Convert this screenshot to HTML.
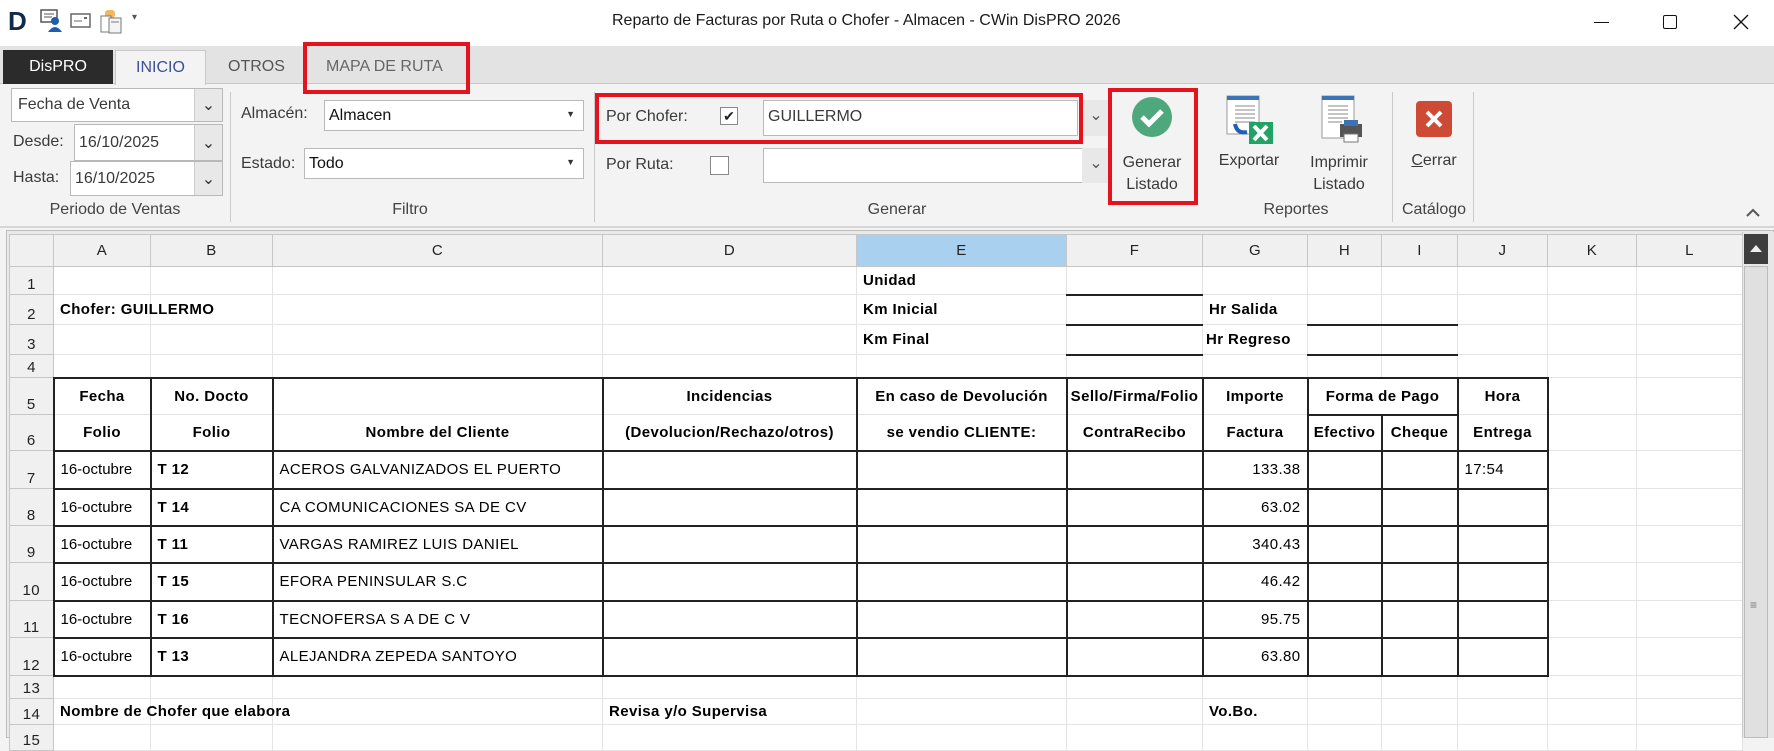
<!DOCTYPE html>
<html><head><meta charset="utf-8">
<style>
*{box-sizing:border-box;margin:0;padding:0}
body{width:1774px;height:738px;overflow:hidden;background:#f3f3f3;font-family:"Liberation Sans",sans-serif;position:relative;color:#333}
.a{position:absolute}
.rt{font-size:16px;color:#3a3a3a;white-space:nowrap}
.box{position:absolute;background:#fff;border:1px solid #b9b9b9}
.dd{position:absolute;background:#e8e8e8;border-left:1px solid #ccc;top:0;bottom:0;right:0;width:28px;display:flex;align-items:center;justify-content:center}
.sep{position:absolute;top:92px;height:130px;width:1px;background:#c9c9c9}
.red{position:absolute;border:4px solid #e3141e}
.glabel{position:absolute;top:201px;font-size:16px;color:#444;transform:translateX(-50%);white-space:nowrap}
table{position:absolute;left:9px;top:234px;width:1733px;border-collapse:collapse;table-layout:fixed;background:#fff;font-size:15px;color:#000}
td{border:1px solid #e4e4e4;white-space:nowrap;overflow:hidden;padding:0 6px;vertical-align:middle;letter-spacing:0.4px}
td.ch{background:#f0f0f0;border:1px solid #c6c6c6;text-align:center;font-size:15px;color:#222}
td.rh{background:#f0f0f0;border:1px solid #c6c6c6;text-align:center;vertical-align:bottom;font-size:15px;color:#222;padding:0 0 1px 0}
.bd{font-weight:bold}
.c{text-align:center}
.r{text-align:right}
.hx{border-left:2px solid #222;border-right:2px solid #222}
.t{border-top:2px solid #222}
.bo{border-bottom:2px solid #222}
.bx{border:2px solid #222}
.ub{border-bottom:2px solid #222}
.sb{z-index:5}
</style></head><body>
<!-- title bar -->
<div class="a" style="left:0;top:0;width:1774px;height:46px;background:#fff"></div>
<div class="a" style="left:8px;top:6px;font:bold 26px 'Liberation Sans',sans-serif;color:#0f2a4a">D</div>
<svg class="a" style="left:40px;top:8px" width="24" height="26"><rect x="1" y="2" width="16" height="12" fill="#fff" stroke="#555" stroke-width="1.5"/><line x1="4" y1="6" x2="14" y2="6" stroke="#555"/><line x1="4" y1="9" x2="12" y2="9" stroke="#555"/><circle cx="15" cy="13" r="4" fill="#1d5fae"/><path d="M8 24 Q15 14 22 24Z" fill="#1d5fae"/></svg>
<svg class="a" style="left:70px;top:13px" width="22" height="16"><rect x="1" y="1" width="19" height="13" fill="#fff" stroke="#666" stroke-width="1.5"/><line x1="4" y1="8" x2="12" y2="8" stroke="#666"/><rect x="14" y="4" width="3" height="2" fill="#666"/></svg>
<svg class="a" style="left:100px;top:8px" width="24" height="28"><rect x="5" y="2" width="10" height="8" rx="3" fill="#f0b860"/><rect x="1" y="8" width="10" height="16" fill="#fff" stroke="#777"/><rect x="9" y="10" width="12" height="15" fill="#f4f4f4" stroke="#777"/><line x1="11" y1="14" x2="19" y2="14" stroke="#777"/></svg>
<div class="a" style="left:132px;top:12px;font-size:10px;color:#555">▾</div>
<div class="a" style="left:612px;top:12px;font-size:16px;color:#1a1a1a;white-space:nowrap">Reparto de Facturas por Ruta o Chofer - Almacen - CWin DisPRO 2026</div>
<div class="a" style="left:1594px;top:22px;width:15px;height:1px;background:#111"></div>
<div class="a" style="left:1663px;top:15px;width:14px;height:14px;border:1.5px solid #111;border-radius:2px"></div>
<svg class="a" style="left:1733px;top:14px" width="16" height="16"><path d="M1 1L15 15M15 1L1 15" stroke="#111" stroke-width="1.3"/></svg>
<!-- tabs -->
<div class="a" style="left:0;top:46px;width:1774px;height:38px;background:#e3e3e3;border-bottom:1px solid #c8c8c8"></div>
<div class="a" style="left:3px;top:50px;width:110px;height:34px;background:#2b2b2b;color:#fff;font-size:16px;text-align:center;line-height:34px">DisPRO</div>
<div class="a" style="left:115px;top:50px;width:91px;height:35px;background:#f3f3f3;border:1px solid #c8c8c8;border-bottom:none;color:#3d4f9a;font-size:16px;text-align:center;line-height:34px">INICIO</div>
<div class="a rt" style="left:228px;top:58px;color:#555">OTROS</div>
<div class="a rt" style="left:326px;top:58px;color:#666">MAPA DE RUTA</div>
<div class="red" style="left:303px;top:42px;width:167px;height:52px"></div>
<!-- Periodo -->
<div class="box" style="left:11px;top:88px;width:212px;height:34px"><span class="rt" style="position:absolute;left:6px;top:7px">Fecha de Venta</span><div class="dd">⌄</div></div>
<div class="a rt" style="left:13px;top:133px">Desde:</div>
<div class="box" style="left:74px;top:124px;width:149px;height:37px"><span class="rt" style="position:absolute;left:4px;top:9px">16/10/2025</span><div class="dd">⌄</div></div>
<div class="a rt" style="left:13px;top:169px">Hasta:</div>
<div class="box" style="left:70px;top:161px;width:153px;height:35px"><span class="rt" style="position:absolute;left:4px;top:8px">16/10/2025</span><div class="dd">⌄</div></div>
<div class="glabel" style="left:115px">Periodo de Ventas</div>
<div class="sep" style="left:230px"></div>
<!-- Filtro -->
<div class="a rt" style="left:241px;top:105px">Almacén:</div>
<div class="box" style="left:324px;top:100px;width:260px;height:31px"><span class="rt" style="position:absolute;left:4px;top:6px;color:#111">Almacen</span><span style="position:absolute;right:8px;top:8px;font-size:9px">▼</span></div>
<div class="a rt" style="left:241px;top:155px">Estado:</div>
<div class="box" style="left:304px;top:148px;width:280px;height:31px"><span class="rt" style="position:absolute;left:4px;top:6px;color:#111">Todo</span><span style="position:absolute;right:8px;top:8px;font-size:9px">▼</span></div>
<div class="glabel" style="left:410px">Filtro</div>
<div class="sep" style="left:594px"></div>
<!-- Generar -->
<div class="a rt" style="left:606px;top:108px">Por Chofer:</div>
<div class="a" style="left:720px;top:107px;width:18px;height:18px;border:1px solid #888;background:#fff;font-size:14px;line-height:16px;text-align:center;color:#222">✔</div>
<div class="box" style="left:763px;top:100px;width:315px;height:36px"><span class="rt" style="position:absolute;left:4px;top:7px">GUILLERMO</span></div>
<div class="a" style="left:1082px;top:100px;width:28px;height:36px;background:#e8e8e8;text-align:center;line-height:32px;color:#555">⌄</div>
<div class="red" style="left:595px;top:93px;width:488px;height:51px"></div>
<div class="a rt" style="left:606px;top:156px">Por Ruta:</div>
<div class="a" style="left:710px;top:156px;width:19px;height:19px;border:1px solid #888;background:#fff"></div>
<div class="box" style="left:763px;top:148px;width:323px;height:35px"></div>
<div class="a" style="left:1082px;top:148px;width:28px;height:35px;background:#e8e8e8;text-align:center;line-height:32px;color:#555">⌄</div>
<div class="glabel" style="left:897px">Generar</div>
<svg class="a" style="left:1131px;top:96px" width="42" height="42"><circle cx="21" cy="21" r="20" fill="#4fa77c"/><path d="M11 21l7 7 13-13" fill="none" stroke="#fff" stroke-width="5"/></svg>
<div class="a rt" style="left:1152px;top:152px;transform:translateX(-50%);text-align:center;line-height:22px">Generar<br>Listado</div>
<div class="red" style="left:1108px;top:88px;width:90px;height:117px"></div>
<!-- Reportes -->
<svg class="a" style="left:1225px;top:94px" width="50" height="52"><rect x="2" y="2" width="32" height="38" fill="#fff" stroke="#999"/><rect x="2" y="2" width="32" height="4" fill="#3d73b5"/><g stroke="#888"><line x1="10" y1="12" x2="30" y2="12"/><line x1="10" y1="16" x2="30" y2="16"/><line x1="10" y1="20" x2="30" y2="20"/><line x1="10" y1="24" x2="30" y2="24"/><line x1="10" y1="28" x2="30" y2="28"/></g><path d="M10 30q2 10 12 8" fill="none" stroke="#1f5fb8" stroke-width="4"/><rect x="24" y="28" width="24" height="22" fill="#21a366"/><path d="M29 32l13 14M42 32L29 46" stroke="#fff" stroke-width="4"/></svg>
<div class="a rt" style="left:1249px;top:152px;transform:translateX(-50%)">Exportar</div>
<svg class="a" style="left:1318px;top:94px" width="50" height="52"><rect x="4" y="2" width="32" height="42" fill="#fff" stroke="#999"/><rect x="4" y="2" width="32" height="4" fill="#3d73b5"/><g stroke="#888"><line x1="10" y1="12" x2="30" y2="12"/><line x1="10" y1="16" x2="30" y2="16"/><line x1="10" y1="20" x2="30" y2="20"/><line x1="10" y1="24" x2="30" y2="24"/><line x1="10" y1="28" x2="24" y2="28"/></g><rect x="22" y="30" width="22" height="13" fill="#555"/><rect x="26" y="26" width="14" height="6" fill="#3d73b5"/><rect x="26" y="40" width="14" height="8" fill="#fff" stroke="#777"/></svg>
<div class="a rt" style="left:1339px;top:152px;transform:translateX(-50%);text-align:center;line-height:22px">Imprimir<br>Listado</div>
<div class="glabel" style="left:1296px">Reportes</div>
<div class="sep" style="left:1392px"></div>
<svg class="a" style="left:1415px;top:100px" width="38" height="38"><rect x="1" y="1" width="36" height="36" rx="4" fill="#cf4a35"/><path d="M12 12l14 14M26 12L12 26" stroke="#fff" stroke-width="4"/></svg>
<div class="a rt" style="left:1434px;top:152px;transform:translateX(-50%)"><u>C</u>errar</div>
<div class="glabel" style="left:1434px">Catálogo</div>
<div class="sep" style="left:1473px"></div>
<svg class="a" style="left:1745px;top:206px" width="16" height="12"><path d="M2 10l6-6 6 6" fill="none" stroke="#555" stroke-width="2"/></svg>
<div class="a" style="left:0;top:226px;width:1774px;height:2px;background:#d6d6d6"></div>
<div class="a" style="left:6px;top:230px;width:1768px;height:508px;background:#e9e9e9;border:1px solid #bdbdbd"></div>
<!-- scrollbar -->
<div class="a sb" style="left:1742px;top:232px;width:32px;height:506px;background:#e7e7e7;border-left:1px solid #c9c9c9"></div>
<div class="a sb" style="left:1744px;top:234px;width:24px;height:30px;background:#3e3e3e"></div>
<svg class="a sb" style="left:1748px;top:243px" width="16" height="10"><path d="M2 9l6-7 6 7z" fill="#eee"/></svg>
<div class="a sb" style="left:1744px;top:266px;width:24px;height:472px;background:#e0e0e0;border:1px solid #bcbcbc"></div>
<div class="a sb" style="left:1750px;top:603px;font-size:12px;color:#777;line-height:4px">≡</div>
<table>
<colgroup><col style="width:44px"><col style="width:97px"><col style="width:122px"><col style="width:330px"><col style="width:254px"><col style="width:210px"><col style="width:136px"><col style="width:105px"><col style="width:74px"><col style="width:76px"><col style="width:90px"><col style="width:89px"><col style="width:106px"></colgroup>
<tr style="height:32px"><td class="ch"></td><td class="ch">A</td><td class="ch">B</td><td class="ch">C</td><td class="ch">D</td><td class="ch" style="background:#a9d0ef">E</td><td class="ch">F</td><td class="ch">G</td><td class="ch">H</td><td class="ch">I</td><td class="ch">J</td><td class="ch">K</td><td class="ch">L</td></tr>
<tr style="height:28px"><td class="rh">1</td><td></td><td></td><td></td><td></td><td class="bd">Unidad</td><td class="ub"></td><td></td><td></td><td></td><td></td><td></td><td></td></tr>
<tr style="height:30px"><td class="rh">2</td><td class="bd" style="overflow:visible">Chofer: GUILLERMO</td><td></td><td></td><td></td><td class="bd">Km Inicial</td><td class="ub"></td><td class="bd">Hr Salida</td><td class="ub"></td><td class="ub"></td><td></td><td></td><td></td></tr>
<tr style="height:30px"><td class="rh">3</td><td></td><td></td><td></td><td></td><td class="bd">Km Final</td><td class="ub"></td><td class="bd" style="padding:0 3px">Hr Regreso</td><td class="ub"></td><td class="ub"></td><td></td><td></td><td></td></tr>
<tr style="height:23px"><td class="rh">4</td><td></td><td></td><td></td><td></td><td></td><td></td><td></td><td></td><td></td><td></td><td></td><td></td></tr>
<tr style="height:37px"><td class="rh">5</td><td class="hx t bd c">Fecha</td><td class="hx t bd c">No. Docto</td><td class="hx t"></td><td class="hx t bd c">Incidencias</td><td class="hx t bd c" style="padding:0 2px">En caso de Devolución</td><td class="hx t bd c" style="padding:0;text-overflow:clip">Sello/Firma/Folio</td><td class="hx t bd c">Importe</td><td class="bx bd c" colspan="2">Forma de Pago</td><td class="hx t bd c">Hora</td><td></td><td></td></tr>
<tr style="height:36px"><td class="rh">6</td><td class="hx bo bd c">Folio</td><td class="hx bo bd c">Folio</td><td class="hx bo bd c">Nombre del Cliente</td><td class="hx bo bd c" style="padding:0 2px">(Devolucion/Rechazo/otros)</td><td class="hx bo bd c">se vendio CLIENTE:</td><td class="hx bo bd c">ContraRecibo</td><td class="hx bo bd c">Factura</td><td class="hx bo bd c" style="padding:0 1px">Efectivo</td><td class="hx bo bd c" style="padding:0 1px">Cheque</td><td class="hx bo bd c">Entrega</td><td></td><td></td></tr>
<tr style="height:38px"><td class="rh">7</td><td class="bx" style="letter-spacing:0">16-octubre</td><td class="bx bd">T 12</td><td class="bx">ACEROS GALVANIZADOS EL PUERTO</td><td class="bx"></td><td class="bx"></td><td class="bx"></td><td class="bx r">133.38</td><td class="bx"></td><td class="bx"></td><td class="bx">17:54</td><td></td><td></td></tr>
<tr style="height:37px"><td class="rh">8</td><td class="bx" style="letter-spacing:0">16-octubre</td><td class="bx bd">T 14</td><td class="bx">CA COMUNICACIONES SA DE CV</td><td class="bx"></td><td class="bx"></td><td class="bx"></td><td class="bx r">63.02</td><td class="bx"></td><td class="bx"></td><td class="bx"></td><td></td><td></td></tr>
<tr style="height:37px"><td class="rh">9</td><td class="bx" style="letter-spacing:0">16-octubre</td><td class="bx bd">T 11</td><td class="bx">VARGAS RAMIREZ LUIS DANIEL</td><td class="bx"></td><td class="bx"></td><td class="bx"></td><td class="bx r">340.43</td><td class="bx"></td><td class="bx"></td><td class="bx"></td><td></td><td></td></tr>
<tr style="height:38px"><td class="rh">10</td><td class="bx" style="letter-spacing:0">16-octubre</td><td class="bx bd">T 15</td><td class="bx">EFORA PENINSULAR S.C</td><td class="bx"></td><td class="bx"></td><td class="bx"></td><td class="bx r">46.42</td><td class="bx"></td><td class="bx"></td><td class="bx"></td><td></td><td></td></tr>
<tr style="height:37px"><td class="rh">11</td><td class="bx" style="letter-spacing:0">16-octubre</td><td class="bx bd">T 16</td><td class="bx">TECNOFERSA S A DE C V</td><td class="bx"></td><td class="bx"></td><td class="bx"></td><td class="bx r">95.75</td><td class="bx"></td><td class="bx"></td><td class="bx"></td><td></td><td></td></tr>
<tr style="height:38px"><td class="rh">12</td><td class="bx" style="letter-spacing:0">16-octubre</td><td class="bx bd">T 13</td><td class="bx">ALEJANDRA ZEPEDA SANTOYO</td><td class="bx"></td><td class="bx"></td><td class="bx"></td><td class="bx r">63.80</td><td class="bx"></td><td class="bx"></td><td class="bx"></td><td></td><td></td></tr>
<tr style="height:23px"><td class="rh">13</td><td></td><td></td><td></td><td></td><td></td><td></td><td></td><td></td><td></td><td></td><td></td><td></td></tr>
<tr style="height:26px"><td class="rh">14</td><td class="bd" style="overflow:visible">Nombre de Chofer que elabora</td><td></td><td></td><td class="bd">Revisa y/o Supervisa</td><td></td><td></td><td class="bd">Vo.Bo.</td><td></td><td></td><td></td><td></td><td></td></tr>
<tr style="height:26px"><td class="rh">15</td><td></td><td></td><td></td><td></td><td></td><td></td><td></td><td></td><td></td><td></td><td></td><td></td></tr>
</table>
</body></html>
